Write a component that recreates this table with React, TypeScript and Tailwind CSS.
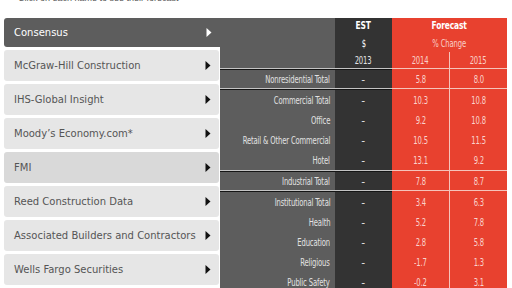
import React from "react";

type Row = { label: string; est: string; y14: string; y15: string };

const groups: { h: string; rows: Row[] }[] = [
  { h: "h-[18px]", rows: [{ label: "Nonresidential Total", est: "–", y14: "5.8", y15: "8.0" }] },
  {
    h: "h-[20px]",
    rows: [
      { label: "Commercial Total", est: "–", y14: "10.3", y15: "10.8" },
      { label: "Office", est: "–", y14: "9.2", y15: "10.8" },
      { label: "Retail & Other Commercial", est: "–", y14: "10.5", y15: "11.5" },
      { label: "Hotel", est: "–", y14: "13.1", y15: "9.2" },
    ],
  },
  { h: "h-[18px]", rows: [{ label: "Industrial Total", est: "–", y14: "7.8", y15: "8.7" }] },
  {
    h: "h-[20px]",
    rows: [
      { label: "Institutional Total", est: "–", y14: "3.4", y15: "6.3" },
      { label: "Health", est: "–", y14: "5.2", y15: "7.8" },
      { label: "Education", est: "–", y14: "2.8", y15: "5.8" },
      { label: "Religious", est: "–", y14: "-1.7", y15: "1.3" },
      { label: "Public Safety", est: "–", y14: "-0.2", y15: "3.1" },
    ],
  },
];

const tabs = [
  "McGraw-Hill Construction",
  "IHS-Global Insight",
  "Moody’s Economy.com*",
  "FMI",
  "Reed Construction Data",
  "Associated Builders and Contractors",
  "Wells Fargo Securities",
];

const cols = "grid grid-cols-[115px_57px_57px_58px]";

const Arrow = ({ light }: { light?: boolean }) => (
  <svg width="6" height="9" viewBox="0 0 6 9" className="shrink-0">
    <path d="M0.5 0 L5.5 4.5 L0.5 9 Z" fill={light ? "#ffffff" : "#111111"} />
  </svg>
);

// condensed face: squeeze the glyphs horizontally
const Narrow = ({ children, right }: { children: React.ReactNode; right?: boolean }) => (
  <span className={`inline-block whitespace-nowrap scale-x-[0.76] ${right ? "origin-right" : "origin-center"}`}>
    {children}
  </span>
);

// two-tone rule on the dark side, thin light line on the red side
const Separator = () => (
  <div className={cols}>
    <div className="h-[2px] border-t border-[#c4c4c4] bg-[#151515]" />
    <div className="h-[2px] border-t border-[#c4c4c4] bg-[#151515]" />
    <div className="h-[2px] border-t border-[#f5c3ba] bg-[#e8412f]" />
    <div className="h-[2px] border-t border-[#f5c3ba] border-l border-l-[#f5c3ba] bg-[#e8412f]" />
  </div>
);

const App: React.FC = () => {
  return (
    <div className="w-[512px] h-[288px] overflow-hidden bg-white font-['DejaVu_Sans',Verdana,sans-serif]">
      <div className="h-[18px] pl-[18px] flex items-start">
        <p className="-mt-[6px] text-[9px] leading-[9px] text-[#555] font-['Liberation_Sans',Arial,sans-serif]">
          Click on each name to see their forecast
        </p>
      </div>

      <div className="flex">
        {/* Tabs */}
        <div className="w-[220px] pl-[4px] flex flex-col">
          <div className="h-[29px] bg-[#5d5d5d] rounded-l-[3px] flex items-center pl-[10px] pr-[8px] text-[10px] text-white">
            <span className="flex-1">Consensus</span>
            <Arrow light />
          </div>
          {tabs.map((t) => (
            <div
              key={t}
              className={`mt-[3px] h-[31px] rounded-[3px] flex items-center pl-[10px] pr-[8px] mr-[1px] text-[10px] text-[#555] ${
                t === "FMI" ? "bg-[#d9d9d9]" : "bg-[#e6e6e6]"
              }`}
            >
              <span className="flex-1 whitespace-nowrap">{t}</span>
              <Arrow />
            </div>
          ))}
        </div>

        {/* Table */}
        <div className="w-[287px] font-['Liberation_Sans_Narrow','DejaVu_Sans_Condensed',sans-serif] text-[10px] tracking-[-0.2px]">
          <div className={cols}>
            <div className="bg-[#5d5d5d] h-[50px]" />
            <div className="bg-[#333] flex flex-col items-center text-white">
              <div className="h-[17px] flex items-center font-bold text-[11px]"><Narrow>EST</Narrow></div>
              <div className="h-[17px] flex items-center"><Narrow>$</Narrow></div>
              <div className="h-[16px] flex items-center text-[#e4e4e4]"><Narrow>2013</Narrow></div>
            </div>
            <div className="col-span-2 bg-[#e8412f] flex flex-col">
              <div className="h-[17px] flex items-center justify-center font-bold text-[11px] text-white">
                <Narrow>Forecast</Narrow>
              </div>
              <div className="h-[17px] flex items-center justify-center text-[#f9cfc7]">
                <Narrow>% Change</Narrow>
              </div>
              <div className="h-[16px] grid grid-cols-[57px_58px] text-[#f9cfc7]">
                <div className="flex items-center justify-center"><Narrow>2014</Narrow></div>
                <div className="flex items-center justify-center border-l border-[#f5c3ba]"><Narrow>2015</Narrow></div>
              </div>
            </div>
          </div>

          {groups.map((g, gi) => (
            <div key={gi}>
              <Separator />
              {g.rows.map((r) => (
                <div key={r.label} className={`${cols} ${g.h}`}>
                  <div className="bg-[#5d5d5d] text-[#e2e2e2] flex items-center justify-end pr-[5px]">
                    <Narrow right>{r.label}</Narrow>
                  </div>
                  <div className="bg-[#333] text-white flex items-center justify-center">
                    <Narrow>{r.est}</Narrow>
                  </div>
                  <div className="bg-[#e8412f] text-[#f9d3cc] flex items-center justify-center">
                    <Narrow>{r.y14}</Narrow>
                  </div>
                  <div className="bg-[#e8412f] text-[#f9d3cc] flex items-center justify-center border-l border-[#f5c3ba]">
                    <Narrow>{r.y15}</Narrow>
                  </div>
                </div>
              ))}
            </div>
          ))}
        </div>
      </div>
    </div>
  );
};

export default App;
